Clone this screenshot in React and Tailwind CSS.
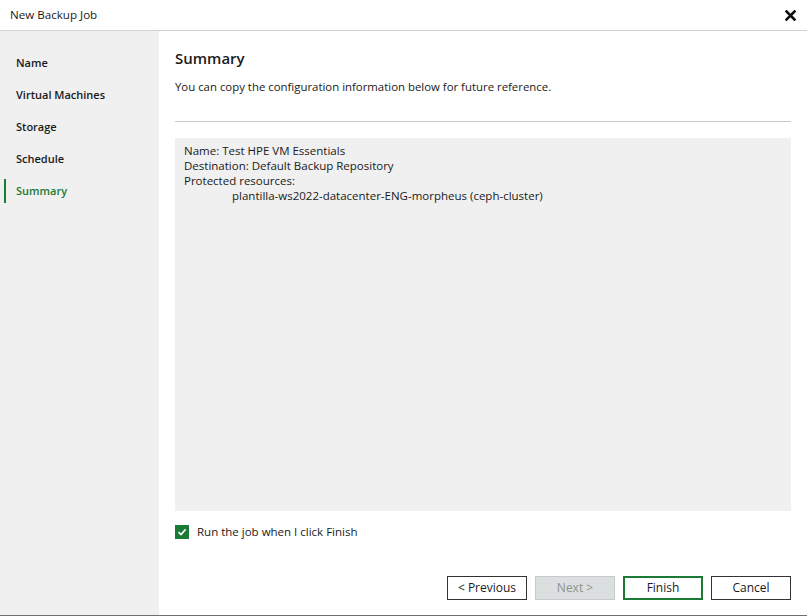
import { useState } from "react";

const steps = ["Name", "Virtual Machines", "Storage", "Schedule", "Summary"];

const font = { fontFamily: '"Open Sans", "Noto Sans", sans-serif' };

function CloseIcon() {
  return (
    <svg width="11" height="11" viewBox="0 0 11 11" className="block">
      <path d="M1.5 1.5 L9.5 9.5 M9.5 1.5 L1.5 9.5" stroke="#111" strokeWidth="2.6" strokeLinecap="square" />
    </svg>
  );
}

export default function App() {
  const [runNow, setRunNow] = useState(true);
  const active = "Summary";

  return (
    <div className="w-[807px] h-[616px] flex flex-col bg-white text-[#1a1a1a] border-b border-[#707070]" style={font}>
      <div className="h-[31px] shrink-0 flex items-center justify-between pl-[10px] pr-[11px] border-b border-[#d2d2d2]">
        <span className="text-[11.6px]">New Backup Job</span>
        <CloseIcon />
      </div>

      <div className="flex flex-1 min-h-0">
        <aside className="w-[159px] shrink-0 bg-[#eff0ef] pt-[16px]">
          {steps.map((s) => (
            <div key={s} className="relative h-[32px] flex items-center pl-[16px]">
              {s === active && <span className="absolute left-[4px] top-[4px] h-[24px] w-[2px] bg-[#1a7b35]" />}
              <span className={`text-[11px] font-semibold ${s === active ? "text-[#1a7b35]" : "text-[#1a1a1a]"}`}>{s}</span>
            </div>
          ))}
        </aside>

        <main className="flex-1 flex flex-col pl-[16px] pr-[16px] pt-[17px] pb-[15px]">
          <h1 className="text-[15px] leading-[20px] font-semibold">Summary</h1>
          <p className="mt-[11px] text-[11.4px] leading-[16px]">
            You can copy the configuration information below for future reference.
          </p>
          <div className="mt-[26px] h-px bg-[#c8c8c8]" />
          <div className="mt-[16px] h-[373px] bg-[#eff0ef] px-[9px] pt-[5px] text-[11.5px] leading-[15px] select-text">
            <div>Name: Test HPE VM Essentials</div>
            <div>Destination: Default Backup Repository</div>
            <div>Protected resources:</div>
            <div className="pl-[48px]">plantilla-ws2022-datacenter-ENG-morpheus (ceph-cluster)</div>
          </div>

          <label className="mt-[12px] flex items-center gap-[8px] cursor-pointer">
            <span
              onClick={() => setRunNow((v) => !v)}
              className={`w-[14px] h-[14px] flex items-center justify-center ${runNow ? "bg-[#1a7b35]" : "border border-[#333] bg-white"}`}
            >
              {runNow && (
                <svg width="10" height="10" viewBox="0 0 10 10">
                  <path d="M1.5 5.2 L4 7.6 L8.6 2.4" fill="none" stroke="#fff" strokeWidth="1.6" />
                </svg>
              )}
            </span>
            <span className="text-[11.5px]">Run the job when I click Finish</span>
          </label>

          <div className="mt-auto flex justify-end gap-[8px]">
            <button className="w-[80px] h-[24px] border border-[#333] bg-white text-[12px]">&lt; Previous</button>
            <button disabled className="w-[80px] h-[24px] border border-[#c8cbcb] bg-[#dcdfdf] text-[12px] text-[#8e9191]">Next &gt;</button>
            <button className="w-[80px] h-[24px] border-2 border-[#1a7b35] bg-white text-[12px]">Finish</button>
            <button className="w-[80px] h-[24px] border border-[#333] bg-white text-[12px]">Cancel</button>
          </div>
        </main>
      </div>
    </div>
  );
}
